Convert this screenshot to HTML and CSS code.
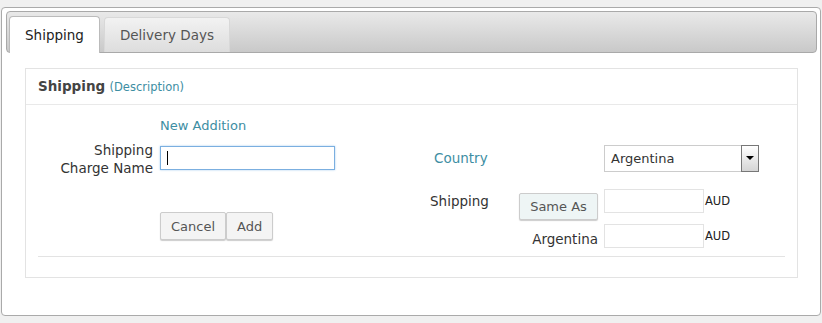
FILE: index.html
```html
<!DOCTYPE html>
<html lang="en">
<head>
  <meta charset="UTF-8">
  <title>Shipping</title>
  <link rel="stylesheet" href="styles.css">
</head>
<body>
<div class="panel">
  <!-- tabs -->
  <div class="tabbar">
    <div class="tab active">Shipping</div>
    <div class="tab">Delivery Days</div>
  </div>
  <div class="content">
    <div class="box">
      <div class="box-head">
        <b>Shipping</b> <a class="desc">(Description)</a>
      </div>
      <div class="box-body">
        <div class="cols">
          <div class="left">
            <div></div>
            <a class="link">New Addition</a>
            <label class="lbl">Shipping<br>Charge Name</label>
            <div class="field">
              <input type="text" class="text focus">
              <span class="caret"></span>
            </div>
            <div></div>
            <div class="btns">
              <button class="btn">Cancel</button><button class="btn">Add</button>
            </div>
          </div>
          <div class="right">
            <span class="link country">Country</span>
            <div class="select">
              <span>Argentina</span>
              <span class="arrow"></span>
            </div>
            <span class="row-lbl">Shipping</span>
            <button class="btn same">Same As</button>
            <div class="money first">
              <input type="text" class="text small">
              <span class="cur">AUD</span>
            </div>
            <span class="row-lbl2">Argentina</span>
            <div class="money">
              <input type="text" class="text small">
              <span class="cur">AUD</span>
            </div>
          </div>
        </div>
        <div class="rule"></div>
      </div>
    </div>
  </div>
</div>
</body>
</html>
```

FILE: styles.css
```css
body {
  margin: 0;
  padding: 0;
  background-color: #F0F0F0;
  font-family: "DejaVu Sans", Verdana, sans-serif;
  font-size: 13.5px;
  color: #333;
}

.panel {
  margin: 7px 1px 0 1px;
  padding: 3px 3px 37px 4px;
  border: 1px solid #AAA;
  border-radius: 4px;
  background-color: #FFF;
}

.tabbar {
  display: flex;
  align-items: flex-end;
  gap: 4px;
  height: 36px;
  padding: 4px 2px 0 2px;
  border: 1px solid #A9A9A9;
  border-radius: 4px;
  background: linear-gradient(#E9E9E9, #C9C9C9);
}

.tab {
  height: 34px;
  line-height: 34px;
  padding: 0 15px;
  border: 1px solid #D8D8D8;
  border-bottom: none;
  border-radius: 4px 4px 0 0;
  background: linear-gradient(#F2F2F2, #DDD);
  color: #555;
}

.tab.active {
  height: 36px;
  line-height: 36px;
  margin-bottom: -1px;
  border-color: #BBB;
  background: #FFF;
  color: #222;
}

.content {
  padding: 15px 19px 0 19px;
}

.box {
  border: 1px solid #E3E3E3;
}

.box-head {
  height: 35px;
  line-height: 35px;
  padding: 0 12px;
  border-bottom: 1px solid #E9E9E9;
}

.box-head b {
  font-size: 13.5px;
  color: #444;
}

.desc {
  font-size: 11.5px;
  color: #3D8EA3;
}

.box-body {
  padding: 12px 12px 20px 12px;
}

.cols {
  display: flex;
  align-items: flex-start;
}

.link {
  color: #3D8EA3;
}

.left {
  display: grid;
  grid-template-columns: 115px 180px;
  column-gap: 7px;
  width: 392px;
  line-height: 18px;
}

.left .link {
  grid-column: 2;
  font-size: 13px;
}

.lbl {
  margin-top: 6px;
  text-align: right;
}

.field {
  position: relative;
  margin-top: 11px;
}

.text {
  display: block;
  box-sizing: border-box;
  height: 24px;
  padding: 0 5px;
  border: 1px solid #DDD;
  outline: none;
  font-family: inherit;
  font-size: 13px;
}

.text.focus {
  width: 175px;
  border-color: #7BAFE0;
  box-shadow: 0 0 2px #A9CDEF;
}

.caret {
  position: absolute;
  left: 7px;
  top: 5px;
  width: 1px;
  height: 14px;
  background-color: #000;
}

.btns {
  display: flex;
  margin-top: 35px;
}

.btn {
  height: 28px;
  padding: 0 10px;
  border: 1px solid #CCC;
  border-radius: 2px;
  background-color: #F4F4F4;
  box-shadow: 0 1px 1px #CCC;
  font-family: inherit;
  font-size: 13px;
  color: #555;
}

.right {
  display: grid;
  grid-template-columns: 83px 79px 160px;
  align-items: start;
  column-gap: 6px;
  margin-top: 28px;
  line-height: 18px;
}

.country {
  grid-column: 1 / 3;
  padding-left: 4px;
  line-height: 27px;
}

.select {
  display: flex;
  align-items: center;
  justify-content: space-between;
  box-sizing: border-box;
  width: 155px;
  height: 27px;
  padding: 0 0 0 6px;
  border: 1px solid #CCC;
  font-size: 13px;
}

.arrow {
  position: relative;
  box-sizing: border-box;
  width: 18px;
  height: 27px;
  margin-right: -1px;
  border: 1px solid #777;
  background: linear-gradient(#FFF, #D5D5D5);
}

.arrow::after {
  content: "";
  position: absolute;
  left: 4px;
  top: 10px;
  border-left: 4px solid transparent;
  border-right: 4px solid transparent;
  border-top: 4px solid #000;
}

.row-lbl {
  margin-top: 20px;
}

.same {
  width: 79px;
  height: 27px;
  margin-top: 21px;
  padding: 0;
  background-color: #EEF5F5;
  font-size: 13px;
}

.money {
  display: flex;
  align-items: center;
  margin-top: 4px;
}

.money.first {
  margin-top: 17px;
}

.money .cur {
  margin-left: 1px;
  font-size: 11.5px;
  color: #222;
}

.text.small {
  width: 100px;
  border-color: #E3E3E3;
}

.row-lbl2 {
  grid-column: 1 / 3;
  margin-top: 10px;
  text-align: right;
}

.rule {
  margin-top: 8px;
  border-top: 1px solid #E3E3E3;
}
```
